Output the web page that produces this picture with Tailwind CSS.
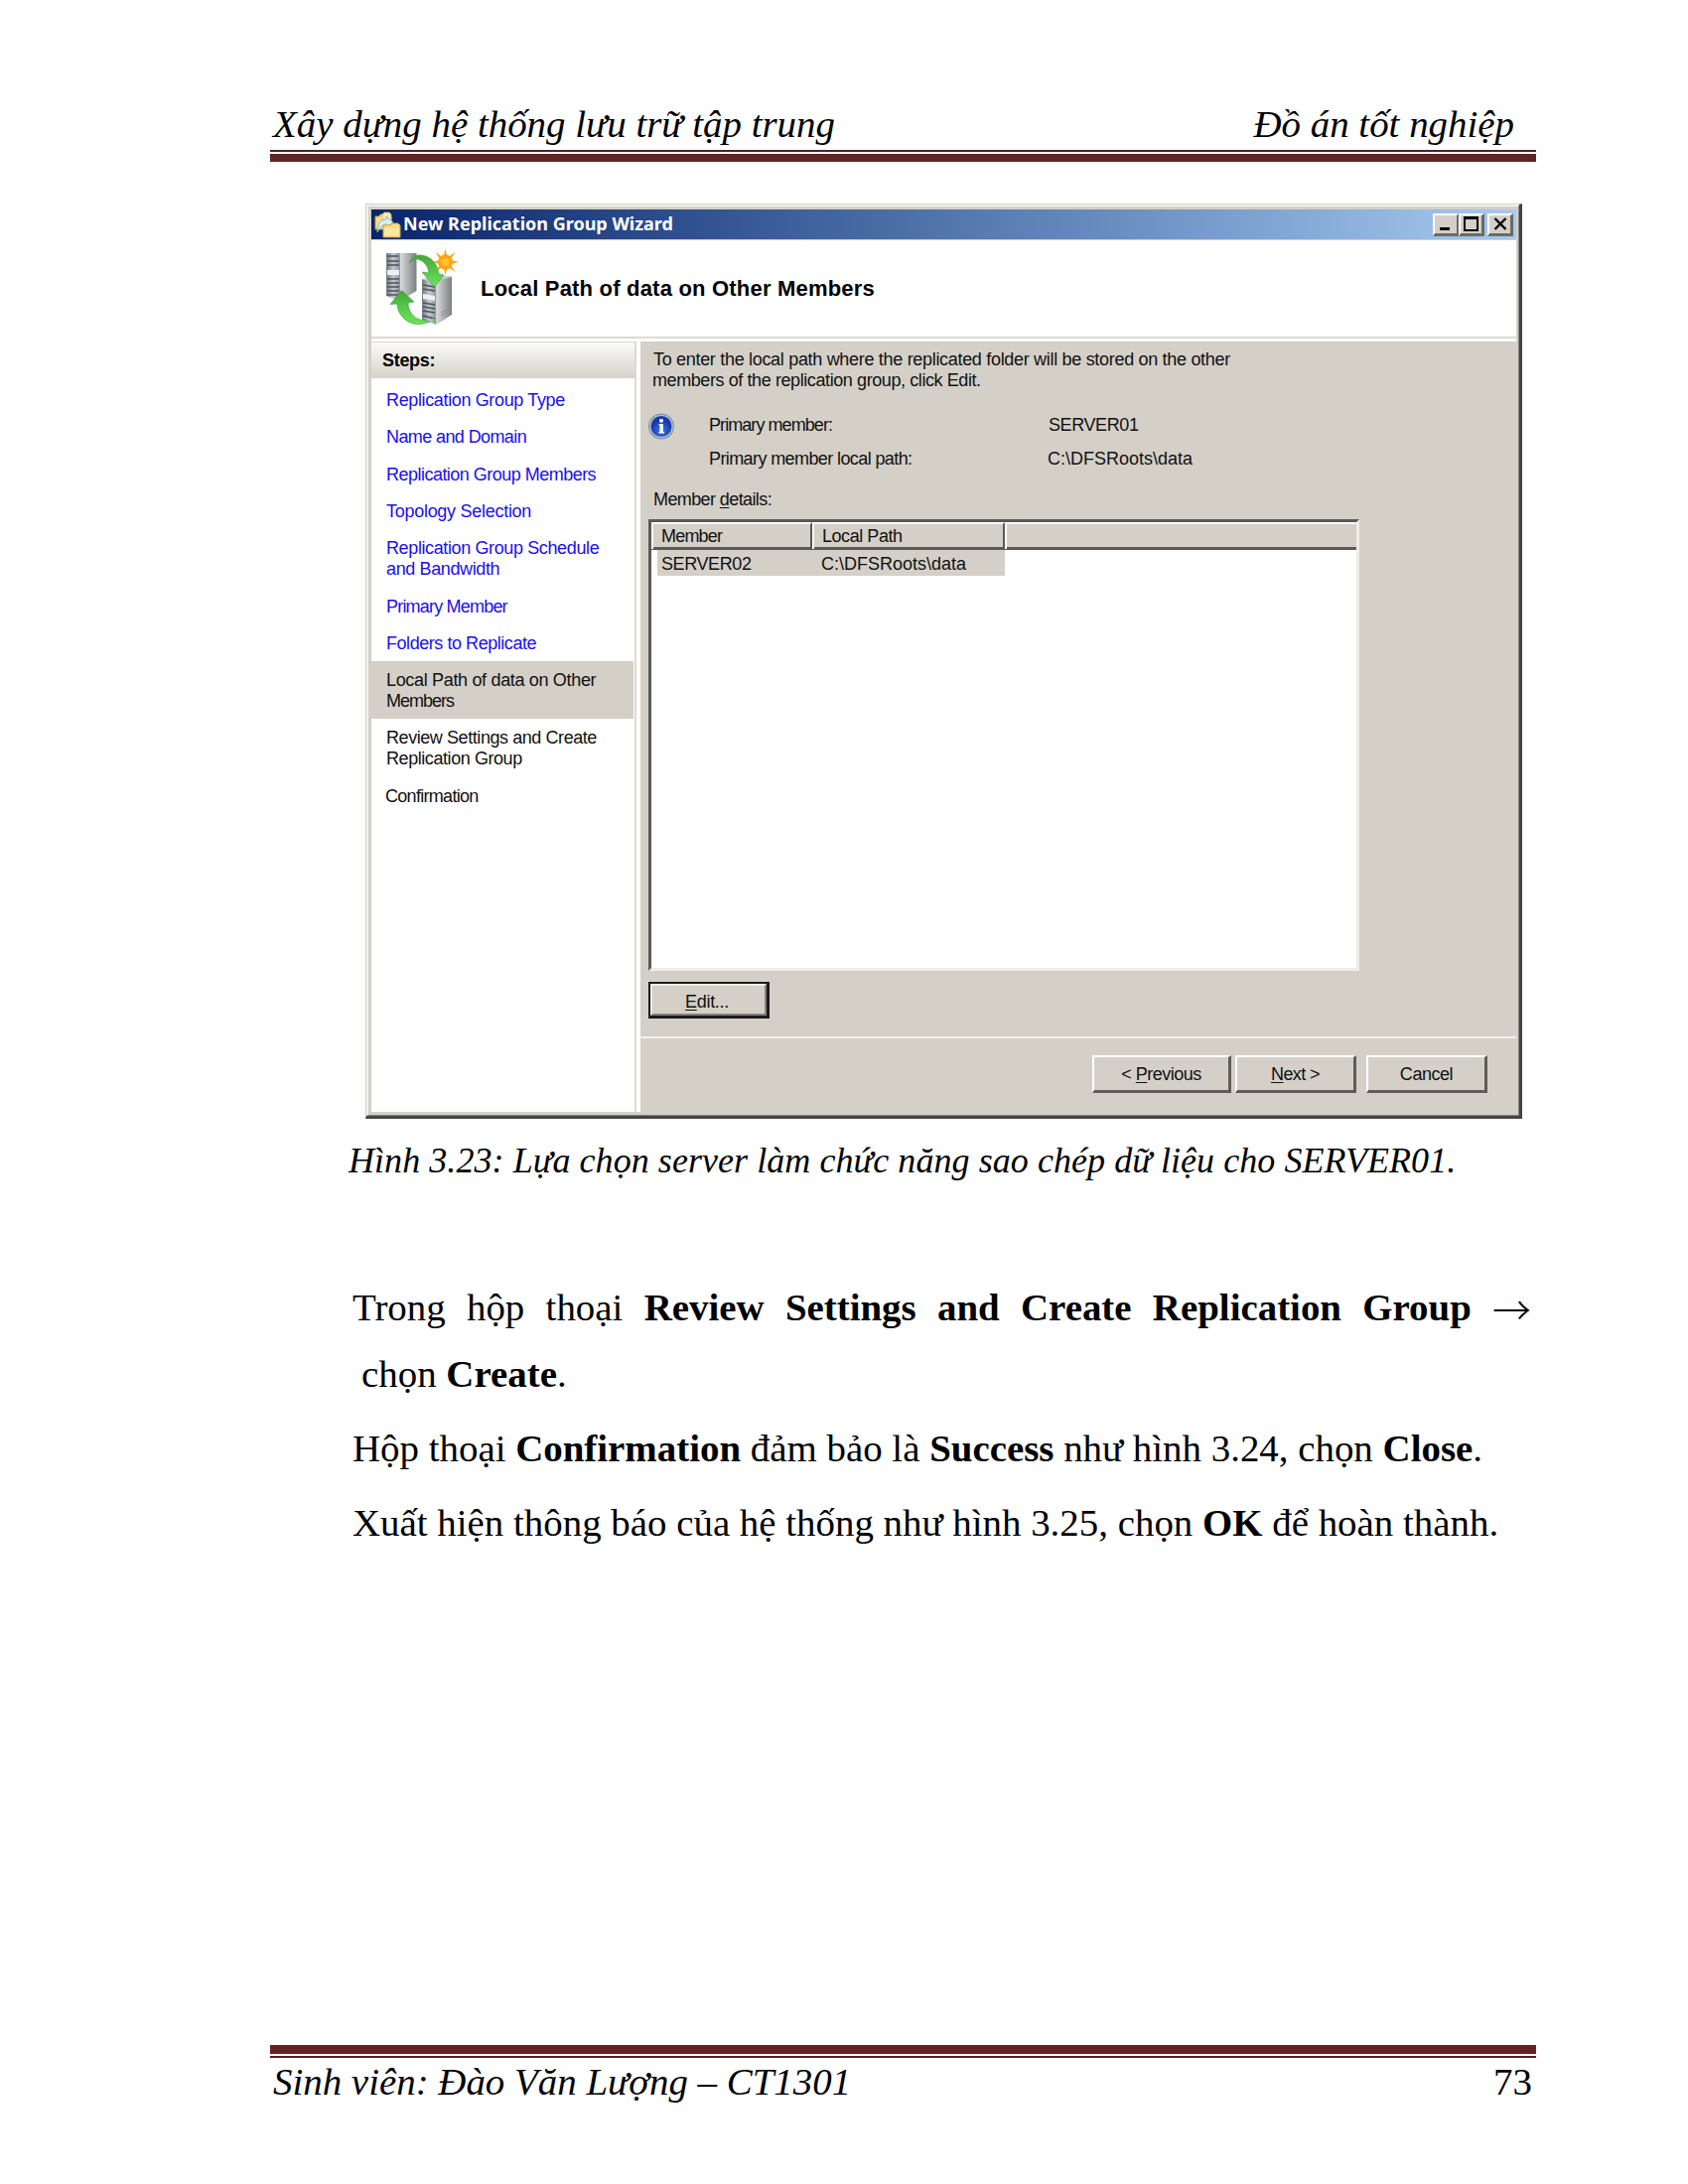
<!DOCTYPE html>
<html lang="vi">
<head>
<meta charset="utf-8">
<title>Xây dựng hệ thống lưu trữ tập trung</title>
<script src="https://cdn.jsdelivr.net/npm/@tailwindcss/browser@4"></script>
</head>
<body class="bg-white text-black">
<div class="flex h-[2200px] w-[1700px] flex-col overflow-hidden bg-white pl-[272px] pt-[103px] font-['Liberation_Serif',serif] text-[38.9px]">

  <header class="w-[1275px]">
    <div class="flex h-[48px] justify-between pl-[3px] pr-[22px] italic leading-[44px]">
      <span class="whitespace-nowrap">Xây dựng hệ thống lưu trữ tập trung</span>
      <span class="whitespace-nowrap">Đồ án tốt nghiệp</span>
    </div>
    <div class="h-[2px] bg-[#4f2323]"></div>
    <div class="mt-[2px] h-[8px] bg-[#622423]"></div>
  </header>

  <!-- Wizard window -->
  <section class="ml-[96px] mt-[42px] flex h-[922px] w-[1165px] flex-col border border-b-[3px] border-r-[3px] border-[#d4d0c8] border-b-[#444] border-r-[#444] bg-[#d4d0c8] font-['Liberation_Sans',Arial,sans-serif] text-[18px] leading-[21px] text-[#111]">
    <div class="flex min-h-0 grow flex-col border-2 border-b border-r border-b-[#858380] border-r-[#858380] border-l-[#f3f1ec] border-t-[#f3f1ec] p-[3px] pr-[2px]">
      <div class="flex h-[30px] w-[1153px] shrink-0 items-center bg-linear-to-r from-[#0a246a] to-[#a6caf0] pl-[3px] pr-[3px]">
        <svg class="mr-[2px] h-[27px] w-[27px] shrink-0" viewBox="0 0 27 27">
          <path d="M1 5h4l1-2h5l2 2h4v13H1z" fill="#f5dc8c" stroke="#c59e3c"/>
          <path d="M8 3l2-2h5l2 2v9H8z" fill="#fbe9ae" stroke="#d5b25a" stroke-width=".8"/>
          <path d="M3 21c0-8 3-13 9-13V5l7 6-7 5v-3c-4 0-6 3-9 8z" fill="#d8eef2" stroke="#78aeb4" stroke-width=".8"/>
          <path d="M9 14h7l2-2h6l2 2v12H9z" fill="#f9dc88" stroke="#cfa444"/>
          <path d="M10 17h15v8H10z" fill="#fde6a4"/>
        </svg>
        <span class="grow whitespace-nowrap pb-[2px] font-['Noto_Sans',sans-serif] text-[18px] font-bold leading-[28px] text-white">New Replication Group Wizard</span>
        <div class="flex">
          <div class="h-[23px] w-[26px] border-b-[3px] border-r-2 border-t-2 border-l-2 border-b-[#6c6a66] border-l-white border-r-[#6c6a66] border-t-white bg-[#d4d0c8] pl-[5px] pt-[12px]"><div class="h-[3px] w-[10px] bg-black"></div></div>
          <div class="h-[23px] w-[26px] border-b-[3px] border-r-[3px] border-t-2 border-l-2 border-b-[#6c6a66] border-l-white border-r-[#6c6a66] border-t-white bg-[#d4d0c8] pl-[3px] pt-[1px]"><div class="h-[15px] w-[15px] border-2 border-t-[3px] border-black"></div></div>
          <div class="ml-[3px] h-[23px] w-[26px] border-b-[3px] border-r-[3px] border-t-2 border-l-2 border-b-[#6c6a66] border-l-white border-r-[#6c6a66] border-t-white bg-[#d4d0c8] pl-[4px] pt-[2px]">
            <svg class="h-[13px] w-[14px]" viewBox="0 0 14 13"><path d="M1.500 1l11 11M12.500 1l-11 11" stroke="#000" stroke-width="2.400"/></svg>
          </div>
        </div>
      </div>

      <div class="mt-[1px] flex h-[97px] w-[1153px] shrink-0 items-start bg-white pl-[14px] pt-[9px]">
        <svg class="h-[77px] w-[74px] shrink-0" viewBox="0 0 74 77">
          <defs>
            <linearGradient id="front"><stop offset="0" stop-color="#6f7880"/><stop offset=".5" stop-color="#c3c9ce"/><stop offset="1" stop-color="#8b9299"/></linearGradient>
            <linearGradient id="side"><stop offset="0" stop-color="#d9dbdc"/><stop offset="1" stop-color="#7b7f83"/></linearGradient>
            <linearGradient id="arrow" x2="0" y2="1"><stop offset="0" stop-color="#3fa83a"/><stop offset="1" stop-color="#6fe45c"/></linearGradient>
          </defs>
          <path d="M1 4h14v48L1 47z" fill="url(#front)"/>
          <path d="M15 4h16.500v38L15 52z" fill="url(#side)"/>
          <path d="M2 7h11M2 12h12M2 16h12M2 30h12M2 34h12M2 38h12M2 42h12M2 46h12" stroke="#4b545c" stroke-width="1.500"/>
          <path d="M2 21h12v5H2z" fill="#eef1f3"/>
          <g fill="#ffa414"><circle cx="60.500" cy="13" r="7.500"/>
          <path d="M60.500-.5l2.400 10h-4.800zM60.500 26.500l2.400-10h-4.800zM47 13l10-2.400v4.800zM74 13l-10-2.400v4.800zM50.500 3l8 5.500-2.800 2.800zM70.500 3l-8 5.500 2.800 2.800zM50.500 23l8-5.500-2.800-2.800zM70.500 23l-8-5.500 2.800-2.800z"/></g>
          <circle cx="60.500" cy="13" r="4" fill="#ffc233"/>
          <path d="M37 30l14.500 3v43L37 71z" fill="url(#front)"/>
          <path d="M37 30l14-3h16v3l-15.500 5z" fill="#c9cccf"/>
          <path d="M51.500 32L67 28v38L51.500 76z" fill="url(#side)"/>
          <path d="M38 36l12 2M38 40l12 2M38 54l12 2M38 58l12 2M38 62l12 2M38 67l12 3" stroke="#4b545c" stroke-width="1.500"/>
          <path d="M38 45l12 2v5l-12-2z" fill="#eef1f3"/>
          <path d="M56 64l7-4M56 67l7-4" stroke="#888" stroke-width=".8"/>
          <path d="M24 14C29 4 36 5 43 8c7 4 10 10 11 17l5 1-9.500 12L37 23l7 1C43 16 38 11 32 10c-3 0-5 1-8 4z" fill="url(#arrow)" stroke="#3b9c38" stroke-width=".6"/>
          <path d="M16.500 41.500L29 53l-6 1c0 8 5 15 12 17l10 2C32 78 24 75 18 69c-4-4-6-9-6-14l-7 .5z" fill="url(#arrow)" stroke="#3b9c38" stroke-width=".6"/>
          <circle cx="48" cy="71" r="1.500" fill="#6fe030"/>
        </svg>
        <h1 class="ml-[22px] mt-[27px] whitespace-nowrap text-[22px] font-bold leading-[26px] tracking-[0.2px] text-black">Local Path of data on Other Members</h1>
      </div>

      <div class="w-[1153px] border-b-[3px] border-t-2 border-b-white border-t-[#dddad3]"></div>

      <div class="flex min-h-0 grow">
        <nav class="w-[271px] shrink-0 border-r-4 border-white bg-white">
          <div class="h-full border-r-2 border-[#dddad3]">
            <div class="h-[37px] border-t border-[#dddad3] bg-linear-to-b from-[#fbfbfa] to-[#d6d2ca] pl-[11px] pt-[8px] text-[18px] font-bold tracking-[-0.3px] text-black">Steps:</div>
            <ul class="mr-[1px] pt-[3px] [&>li]:pb-[7.150px] [&>li]:pl-[15px] [&>li]:pt-[9.150px] [&>li]:whitespace-nowrap">
              <li class="tracking-[-0.36px] text-[#1a10f0]">Replication Group Type</li>
              <li class="tracking-[-0.6px] text-[#1a10f0]">Name and Domain</li>
              <li class="tracking-[-0.52px] text-[#1a10f0]">Replication Group Members</li>
              <li class="tracking-[-0.28px] text-[#1a10f0]">Topology Selection</li>
              <li class="tracking-[-0.38px] text-[#1a10f0]">Replication Group Schedule<br>and Bandwidth</li>
              <li class="tracking-[-0.8px] text-[#1a10f0]">Primary Member</li>
              <li class="tracking-[-0.45px] text-[#1a10f0]">Folders to Replicate</li>
              <li class="bg-[#d4d0c8] tracking-[-0.33px]">Local Path of data on Other<br><span class="tracking-[-1px]">Members</span></li>
              <li class="tracking-[-0.43px]">Review Settings and Create<br>Replication Group</li>
              <li class="-ml-px tracking-[-0.7px]">Confirmation</li>
            </ul>
          </div>
        </nav>

        <main class="flex w-[882px] flex-col">
          <div class="flex h-[700px] flex-col items-start pl-[8px] pt-[8px]">
            <p class="whitespace-nowrap pl-[5px]"><span class="tracking-[-0.31px]">To enter the local path where the replicated folder will be stored on the other</span><br><span class="-ml-px tracking-[-0.41px]">members of the replication group, click Edit.</span></p>
            <div class="mt-[24px] grid grid-cols-[61px_341px_1fr] gap-y-[13px] whitespace-nowrap">
              <svg class="-mt-[2px] -mb-[4px] h-[27px] w-[27px]" viewBox="0 0 27 27">
                <defs><radialGradient id="info" cy=".7"><stop offset="0" stop-color="#3f78e8"/><stop offset="1" stop-color="#1638a8"/></radialGradient></defs>
                <circle cx="13" cy="13.500" r="13" fill="#8492a8"/><circle cx="13" cy="13.500" r="11.800" fill="#b4bfd0"/><circle cx="13" cy="13.500" r="10.500" fill="url(#info)"/>
                <circle cx="13" cy="7.800" r="2" fill="#fff"/><path d="M10.500 11h4.300v8H16v1.500h-5.500V19h1v-6.500h-1z" fill="#fff"/>
              </svg>
              <span class="tracking-[-0.93px]">Primary member:</span><span class="pl-px tracking-[-0.4px]">SERVER01</span>
              <span></span><span class="tracking-[-0.6px]">Primary member local path:</span><span>C:\DFSRoots\data</span>
            </div>
            <p class="mt-[20px] pl-[5px] tracking-[-0.6px]">Member <u class="underline-offset-2">d</u>etails:</p>
            <div class="mt-[9px] h-[455px] w-[716px] border-[3px] border-b-[#f0ede8] border-l-[#5c5a58] border-r-[#f0ede8] border-t-[#5c5a58] bg-white">
              <div class="grid h-[28px] grid-cols-[162px_194px_1fr] border-b-[3px] border-[#5c5a58] bg-[#d4d0c8] leading-[25px]">
                <div class="border-l-2 border-r-2 border-t-2 border-l-white border-r-[#5c5a58] border-t-white pl-[8px] tracking-[-0.8px]">Member</div>
                <div class="border-l-2 border-r-2 border-t-2 border-l-white border-r-[#5c5a58] border-t-white pl-[8px] tracking-[-0.45px]">Local Path</div>
                <div class="border-l-2 border-t-2 border-white"></div>
              </div>
              <div class="ml-[6px] grid h-[26px] w-[350px] grid-cols-[161px_1fr] bg-[#d4d0c8] pl-[4px] pt-[4px]">
                <span class="tracking-[-0.4px]">SERVER02</span><span>C:\DFSRoots\data</span>
              </div>
            </div>
            <button class="mt-[11px] h-[37px] w-[122px] border-2 border-b-[3px] border-r-[3px] border-[#1c1c1c]"><span class="flex h-full items-center justify-center border-2 border-b-[#85827d] border-l-[#f0ede8] border-r-[#85827d] border-t-[#f0ede8] pr-[3px] pt-[4px] tracking-[-0.3px]"><u class="underline-offset-2">E</u>dit...</span></button>
          </div>
          <div class="h-[2px] bg-[#f3f1ec]"></div>
          <div class="mt-[17px] flex justify-end pr-[29px]">
            <button class="h-[38px] w-[140px] border-2 border-b-[3px] border-r-[3px] border-b-[#5f5c58] border-l-white border-r-[#5f5c58] border-t-white pt-px tracking-[-0.5px]">&lt; <u class="underline-offset-2">P</u>revious</button>
            <button class="ml-[4px] h-[38px] w-[122px] border-2 border-b-[3px] border-r-[3px] border-b-[#5f5c58] border-l-white border-r-[#5f5c58] border-t-white pt-px tracking-[-0.6px]"><u class="underline-offset-2">N</u>ext &gt;</button>
            <button class="ml-[10px] h-[38px] w-[122px] border-2 border-b-[3px] border-r-[3px] border-b-[#5f5c58] border-l-white border-r-[#5f5c58] border-t-white pt-px tracking-[-0.45px]">Cancel</button>
          </div>
        </main>
      </div>
    </div>
  </section>

  <p class="ml-[79px] mt-[22px] whitespace-nowrap text-[36px] italic leading-[40px] tracking-[0.06px]">Hình 3.23: Lựa chọn server làm chức năng sao chép dữ liệu cho SERVER01.</p>

  <article class="ml-[83px] mt-[94px] w-[1187px] leading-[67px]">
    <p class="h-[67px] [text-align-last:justify]">Trong hộp thoại <b>Review Settings and Create Replication Group</b> <span class="align-[-4px] font-['Noto_Sans_CJK_JP',sans-serif] font-light leading-none">→</span></p>
    <p class="pl-[9px]">chọn <b>Create</b>.</p>
    <p class="mt-[8px] whitespace-nowrap">Hộp thoại <b>Confirmation</b> đảm bảo là <b>Success</b> như hình 3.24, chọn <b>Close</b>.</p>
    <p class="mt-[8px] whitespace-nowrap">Xuất hiện thông báo của hệ thống như hình 3.25, chọn <b>OK</b> để hoàn thành.</p>
  </article>

  <footer class="mb-[85px] mt-auto w-[1275px]">
    <div class="h-[9px] bg-[#622423]"></div>
    <div class="mt-[2px] h-[2px] bg-[#4f2323]"></div>
    <div class="flex h-[42px] justify-between pl-[3px] pr-[4px] pt-[2px] leading-[44px]">
      <span class="whitespace-nowrap italic">Sinh viên: Đào Văn Lượng – CT1301</span>
      <span>73</span>
    </div>
  </footer>
</div>
</body>
</html>
